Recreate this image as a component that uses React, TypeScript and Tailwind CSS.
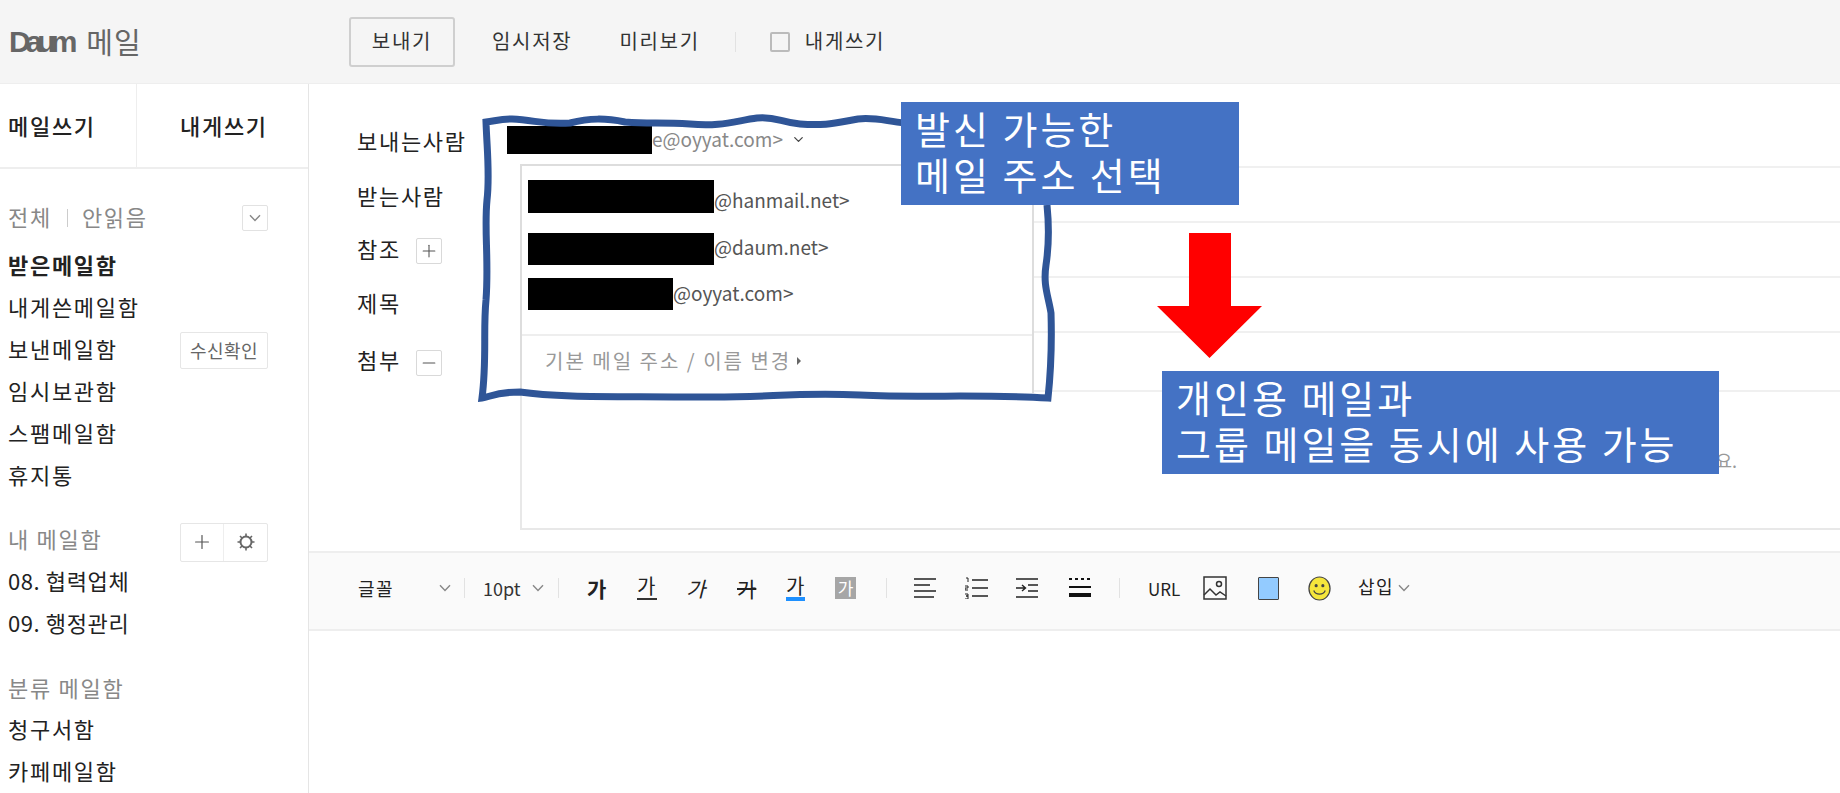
import { ChevronDown, Plus, Minus } from "lucide-react";

const Chevron = ({ className = "" }: { className?: string }) => (
  <svg viewBox="0 0 12 8" className={`w-[12px] h-[8px] shrink-0 ${className}`} fill="none" stroke="#888" strokeWidth="1.4">
    <path d="M1 1.2 L6 6.5 L11 1.2" />
  </svg>
);

const Divider = ({ className = "" }: { className?: string }) => (
  <span className={`w-px h-[20px] bg-[#e2e2e2] shrink-0 ${className}`} />
);

const SideItem = ({ label, bold, tight }: { label: string; bold?: boolean; tight?: boolean }) => (
  <li className={`h-[42px] pb-[3px] flex items-center text-[#222] ${bold ? "font-bold" : ""} ${tight ? "tracking-[0.6px]" : ""}`}>{label}</li>
);

const Sidebar = () => (
  <aside className="w-[309px] shrink-0 border-r border-[#e5e5e5] overflow-hidden">
    <div className="h-[85px] flex border-b-2 border-[#eeeeee] text-[#222] font-medium">
      <div className="w-[137px] border-r border-[#eeeeee] flex items-center pl-[8px]">메일쓰기</div>
      <div className="flex-1 flex items-center pl-[43px]">내게쓰기</div>
    </div>

    <div className="pl-[8px] pr-[40px] pt-[28px]">
      <div className="h-[42px] mb-[6px] flex items-center text-[#888]">
        <span className="pb-[4px]">전체</span>
        <span className="w-px h-[18px] bg-[#ccc] ml-[15px] mr-[14px]" />
        <span className="pb-[4px]">안읽음</span>
        <button className="ml-auto w-[26px] h-[26px] border border-[#e2e2e2] rounded-[2px] flex items-center justify-center">
          <Chevron />
        </button>
      </div>
      <ul>
        <SideItem label="받은메일함" bold />
        <SideItem label="내게쓴메일함" />
        <li className="h-[42px] flex items-center justify-between text-[#222]">
          <span className="pb-[3px]">보낸메일함</span>
          <button className="w-[88px] h-[37px] border border-[#e6e6e6] rounded-[2px] text-[18px] tracking-[0.5px] text-[#666]">수신확인</button>
        </li>
        <SideItem label="임시보관함" />
        <SideItem label="스팸메일함" />
        <SideItem label="휴지통" />
      </ul>

      <div className="h-[42px] mt-[22px] flex items-center justify-between text-[#888]">
        <span className="pb-[3px]">내 메일함</span>
        <div className="w-[88px] h-[39px] mt-[4px] border border-[#e6e6e6] rounded-[2px] flex">
          <span className="w-[43px] border-r border-[#eeeeee] flex items-center justify-center">
            <Plus size={22} strokeWidth={1.3} color="#555" />
          </span>
          <span className="flex-1 flex items-center justify-center">
            <svg viewBox="0 0 20 20" className="w-[20px] h-[20px]" fill="none" stroke="#666" strokeWidth="2">
              <circle cx="10" cy="10" r="5.5" />
              <path d="M10 1.5v3M10 15.5v3M1.5 10h3M15.5 10h3M4 4l2 2M14 14l2 2M16 4l-2 2M6 14l-2 2" strokeWidth="1.6" />
            </svg>
          </span>
        </div>
      </div>
      <ul>
        <SideItem label="08. 협력업체" tight />
        <SideItem label="09. 행정관리" tight />
      </ul>

      <div className="h-[42px] mt-[22px] pb-[1px] flex items-center text-[#888]">분류 메일함</div>
      <ul>
        <SideItem label="청구서함" />
        <SideItem label="카페메일함" />
      </ul>
    </div>
  </aside>
);

const FormRow = ({
  label,
  children,
  height = "h-[55px]",
  labelClass = "",
  action,
}: {
  label: string;
  children?: React.ReactNode;
  height?: string;
  labelClass?: string;
  action?: React.ReactNode;
}) => (
  <div className={`${height} flex pl-[48px]`}>
    <div className="w-[163px] shrink-0 flex items-center text-[#222]">
      <span className={labelClass}>{label}</span>
      {action}
    </div>
    <div className="flex-1 border-b-2 border-[#f0f0f0] flex items-center">{children}</div>
  </div>
);

const SmallBtn = ({ children }: { children: React.ReactNode }) => (
  <button className="ml-[15px] w-[26px] h-[26px] border border-[#d9d9d9] rounded-[2px] flex items-center justify-center">{children}</button>
);

const Toolbar = () => (
  <div className="h-[80px] mt-[21px] pb-[6px] bg-[#fafafa] border-y-2 border-[#eeeeee] flex items-center pl-[49px] text-[#222] text-[18px] tracking-normal">
    <span className="w-[36px] whitespace-nowrap tracking-[1.5px]">글꼴</span>
    <Chevron className="ml-[45px]" />
    <Divider className="ml-[13px]" />
    <span className="w-[38px] ml-[18px] text-[#333]">10pt</span>
    <Chevron className="ml-[11px]" />
    <Divider className="ml-[14px]" />
    <span className="w-[20px] ml-[28px] text-[21px] font-bold leading-none">가</span>
    <span className="w-[20px] ml-[30px] text-[20px] leading-none border-b-2 border-[#333] pb-[2px]">가</span>
    <span className="w-[20px] ml-[29px] text-[21px] italic leading-none">가</span>
    <span className="w-[20px] ml-[31px] text-[21px] line-through leading-none">가</span>
    <span className="w-[19px] ml-[29px] text-[20px] leading-none border-b-[4px] border-[#1e90ff] pb-[1px]">가</span>
    <span className="w-[21px] h-[22px] ml-[30px] bg-[#a6a6a6] text-white text-[17px] leading-[22px] text-center">가</span>
    <Divider className="ml-[30px]" />

    <svg viewBox="0 0 22 22" className="w-[22px] h-[22px] ml-[27px]" stroke="#222" strokeWidth="1.6">
      <path d="M0 2h22M0 8h16M0 14h22M0 20h20" />
    </svg>
    <svg viewBox="0 0 23 22" className="w-[23px] h-[22px] ml-[29px]" fill="none" stroke="#222">
      <path d="M7 3h16M7 11h16M7 19h16" strokeWidth="1.6" />
      <path d="M1 1h2v4M0 9h3v2H0v2h3M0 17h3v2H1h2v3H0" strokeWidth="1" />
    </svg>
    <svg viewBox="0 0 22 22" className="w-[22px] h-[22px] ml-[28px]" fill="none" stroke="#222" strokeWidth="1.6">
      <path d="M0 2h22M12 8h10M12 14h10M0 20h22" />
      <path d="M0 11h9M6 8l3.5 3-3.5 3" strokeWidth="1.4" />
    </svg>
    <svg viewBox="0 0 22 22" className="w-[22px] h-[22px] ml-[31px]" fill="none" stroke="#111">
      <path d="M0 2h22" strokeWidth="2" strokeDasharray="3 3" />
      <path d="M0 10h22" strokeWidth="2" />
      <path d="M0 18h22" strokeWidth="4" />
    </svg>
    <Divider className="ml-[28px]" />

    <span className="w-[29px] ml-[28px] text-[17px] leading-none">URL</span>
    <svg viewBox="0 0 24 24" className="w-[24px] h-[24px] ml-[26px]" fill="none" stroke="#333" strokeWidth="1.5">
      <rect x="1" y="1" width="22" height="22" />
      <circle cx="16" cy="8" r="2.5" />
      <path d="M1 19l6-6 6 6 4-3 6 4" />
    </svg>
    <span className="w-[21px] h-[23px] ml-[31px] bg-[#93cbff] border-[1.5px] border-[#444] rounded-[1px]" />
    <svg viewBox="0 0 24 26" className="w-[23px] h-[25px] ml-[29px]" fill="#f5e63c" stroke="#444" strokeWidth="1.3">
      <ellipse cx="12" cy="13" rx="11" ry="12" />
      <circle cx="8.5" cy="10" r="1" fill="#444" />
      <circle cx="15.5" cy="10" r="1" fill="#444" />
      <path d="M6 15c2 5 10 5 12 0" fill="none" />
    </svg>
    <span className="w-[36px] ml-[27px] -mt-[4px] whitespace-nowrap tracking-[1.5px] text-[#222]">삽입</span>
    <Chevron className="ml-[4px]" />
  </div>
);

// hand drawn outline from the annotation
const Scribble = () => (
  <svg className="absolute left-0 top-0 w-[1840px] h-[793px] pointer-events-none" viewBox="0 0 1840 793" fill="none" stroke="#2f5597" strokeWidth="7">
    <path d="M905 123 C885 121 875 117 858 119 C835 123 825 126 800 124 C780 122 775 116 757 118 C735 121 720 127 690 124 C660 122 650 124 625 122 C605 118 590 118 570 123 C545 125 535 120 512 119 C500 119 495 121 486 122 C487 150 490 175 487 200 C484 230 489 260 486 300 C483 330 487 360 482 398 C490 397 495 392 520 392 C560 398 620 396 700 397 C770 398 790 392 860 395 C920 398 980 394 1048 398 C1051 370 1052 345 1051 313 C1048 295 1043 285 1046 265 C1049 245 1049 225 1047 205" />
  </svg>
);

const SenderMenu = () => (
  <div className="absolute left-[520px] top-[164px] w-[514px] h-[229px] bg-white border-2 border-[#dddddd] border-b-0 text-[19px] text-[#555] tracking-normal">
    <div className="h-[168px] relative">
      <div className="absolute left-[6px] top-[14px] flex items-end">
        <span className="w-[186px] h-[33px] bg-black" />
        <span className="leading-[26px]">@hanmail.net&gt;</span>
      </div>
      <div className="absolute left-[6px] top-[67px] flex items-center">
        <span className="w-[186px] h-[32px] bg-black" />
        <span className="-mt-[4px]">@daum.net&gt;</span>
      </div>
      <div className="absolute left-[6px] top-[112px] flex items-center">
        <span className="w-[145px] h-[32px] bg-black" />
        <span className="-mt-[2px]">@oyyat.com&gt;</span>
      </div>
    </div>
    <div className="h-[57px] pb-[6px] border-t-2 border-[#eeeeee] flex items-center pl-[23px] text-[#999] text-[20px] tracking-[2px] whitespace-nowrap">
      기본 메일 주소 / 이름 변경
      <span className="ml-[6px] w-0 h-0 border-y-[4px] border-y-transparent border-l-[4px] border-l-[#666]" />
    </div>
  </div>
);

export default function App() {
  return (
    <div className="relative w-full h-[793px] overflow-hidden bg-white font-['Noto_Sans_CJK_KR','Noto_Sans',sans-serif] text-[22px] tracking-[1.7px]">
      <header className="h-[84px] bg-[#f5f5f5] flex items-center text-[#333] border-b border-[#eeeeee] text-[20px]">
        <div className="w-[349px] shrink-0 pl-[9px] flex items-center text-[#666]">
          <span className="font-['Liberation_Sans',sans-serif] font-bold text-[30px] tracking-[-5px] leading-none">Daum</span>
          <span className="ml-[14px] text-[29px] tracking-[1px] leading-none">메일</span>
        </div>
        <button className="w-[106px] h-[50px] pb-[2px] border-2 border-[#cfcfcf] rounded-[3px]">보내기</button>
        <button className="ml-[37px] pb-[2px]">임시저장</button>
        <button className="ml-[47px] pb-[2px]">미리보기</button>
        <Divider className="ml-[35px]" />
        <span className="ml-[34px] w-[20px] h-[20px] border-2 border-[#bbbbbb] rounded-[2px]" />
        <span className="ml-[15px] pb-[2px]">내게쓰기</span>
      </header>

      <div className="flex h-[709px]">
        <Sidebar />
        <main className="flex-1 flex flex-col min-w-0">
          <div className="pt-[29px]">
            <FormRow label="보내는사람">
              <div className="-ml-[13px] flex items-center text-[19px] tracking-normal text-[#888]">
                <span className="w-[145px] h-[28px] bg-black" />
                <span>e@oyyat.com&gt;</span>
                <ChevronDown size={15} color="#444" className="ml-[8px]" />
              </div>
            </FormRow>
            <FormRow label="받는사람" />
            <FormRow
              label="참조"
              labelClass="pb-[4px]"
              action={
                <SmallBtn>
                  <Plus size={20} strokeWidth={1.3} color="#555" />
                </SmallBtn>
              }
            />
            <FormRow label="제목" labelClass="pb-[6px]" />
            <FormRow
              label="첨부"
              height="h-[59px]"
              labelClass="pb-[6px]"
              action={
                <SmallBtn>
                  <Minus size={20} strokeWidth={1.3} color="#555" />
                </SmallBtn>
              }
            />
          </div>
          <div className="ml-[211px] h-[138px] border-l-2 border-b-2 border-[#e8e8e8] flex justify-end items-start pt-[55px] pr-[103px] text-[18px] tracking-normal text-[#999]">
            요.
          </div>
          <Toolbar />
          <div className="flex-1 bg-white" />
        </main>
      </div>

      <SenderMenu />
      <Scribble />

      {/* annotations on top of the screenshot */}
      <div className="absolute left-[901px] top-[102px] w-[338px] h-[103px] bg-[#4472c4] text-white text-[38px] leading-[46px] pl-[14px] pt-[3px] tracking-[3px] whitespace-nowrap">
        <p>발신 가능한</p>
        <p>메일 주소 선택</p>
      </div>
      <svg className="absolute left-[1157px] top-[233px] w-[105px] h-[125px]" viewBox="0 0 105 125" fill="#ff0000">
        <path d="M32 0h42v73h31L52.5 125 0 73h32z" />
      </svg>
      <div className="absolute left-[1162px] top-[371px] w-[557px] h-[103px] bg-[#4472c4] text-white text-[38px] leading-[46px] pl-[14px] pt-[3px] tracking-[3px] whitespace-nowrap">
        <p>개인용 메일과</p>
        <p>그룹 메일을 동시에 사용 가능</p>
      </div>
    </div>
  );
}
